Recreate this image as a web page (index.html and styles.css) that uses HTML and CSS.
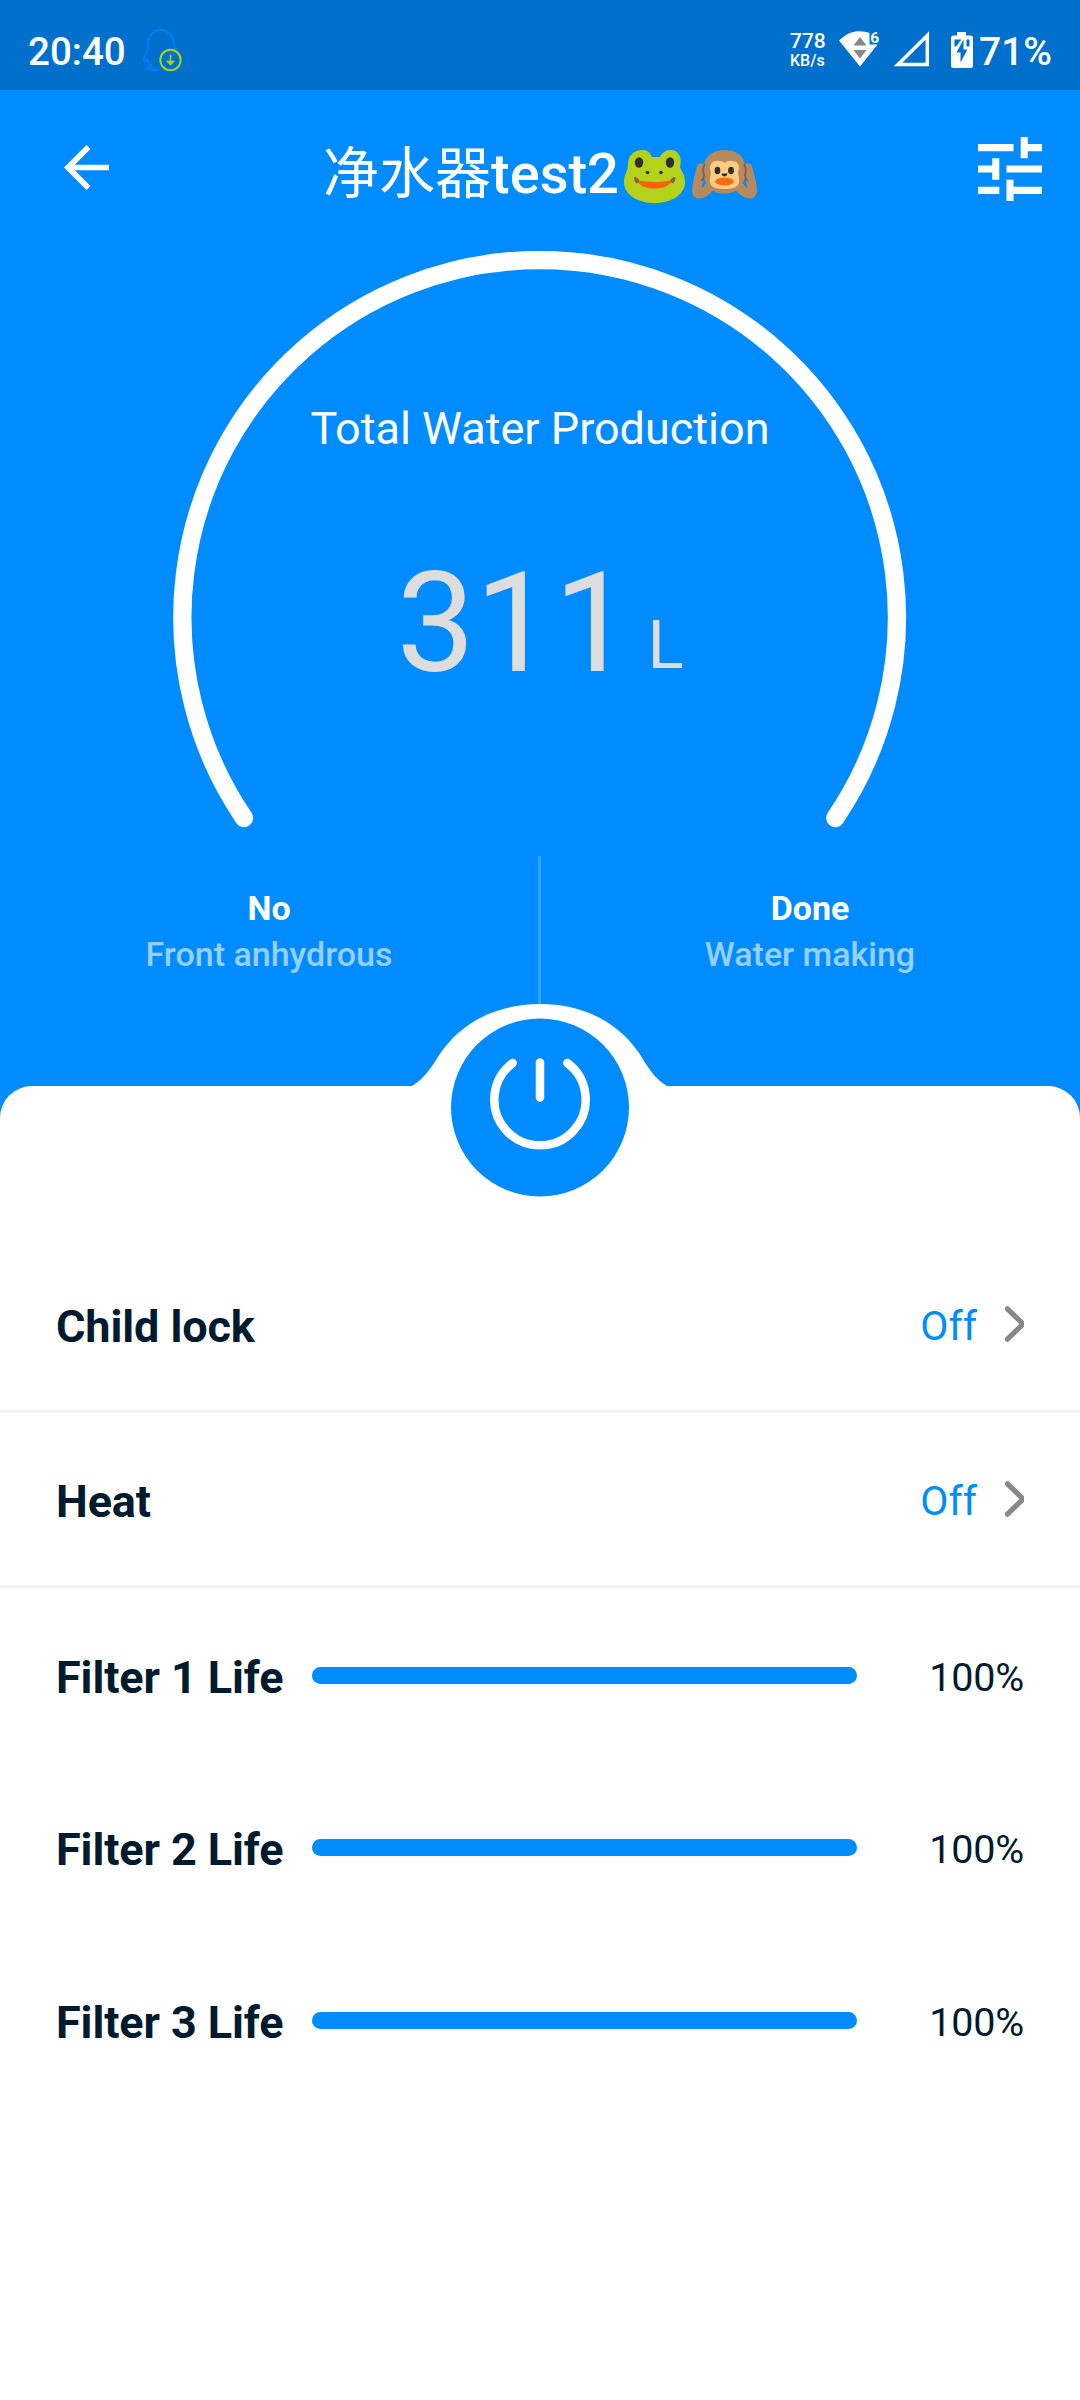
FILE: index.html
```html
<!DOCTYPE html>
<html lang="en">
<head>
<meta charset="utf-8">
<title>净水器test2</title>
<link rel="stylesheet" href="styles.css">
</head>
<body>
<main class="screen">
  <header class="status">
    <span class="clock">20:40</span>
    <svg class="qq" viewBox="0 0 40 43" width="40" height="43">
      <path d="M17 41C12 43 6 42 5.500 40C7 39 9 38.500 9 37.500C7 36 6 34 5.500 31.500C4 33.500 2.500 34 2 32C2 28 3.500 26 6 22.500V17C6 8 11 2 18.500 2S31 8 32 15L33 21" fill="none" stroke="#007cff" stroke-width="2"/>
      <circle cx="28.500" cy="32" r="10.200" fill="none" stroke="#a8d516" stroke-width="1.900"/>
      <path d="M28.500 26.500V35" stroke="#a8d516" stroke-width="1.600"/>
      <path d="M23.800 32.800H33.200L28.500 37.800Z" fill="#a8d516"/>
    </svg>
    <div class="speed"><span class="rate">778</span><span class="unit">KB/s</span></div>
    <svg class="wifi" viewBox="0 0 44 36" width="44" height="36">
      <path d="M0 9.500C11 -1.500 22 -1 30.500 2V13.500H38.500L21 35.500Z" fill="#fff"/>
      <path d="M14.500 14.500L21 6L27.500 14.500ZM14.500 19H27.500L21 27.500Z" fill="#888"/>
      <text x="31.200" y="12" class="wifi-gen">6</text>
    </svg>
    <svg class="signal" viewBox="0 0 36 36" width="36" height="36"><path d="M4 33.400L33.300 4.500V33.400Z" fill="none" stroke="#fff" stroke-width="3.500"/></svg>
    <svg class="battery" viewBox="0 0 22 36" width="22" height="36">
      <path d="M6 0H15V3.500H19.500Q22 3.500 22 6V33.500Q22 36 19.500 36H2.500Q0 36 0 33.500V6Q0 3.500 2.500 3.500H6Z" fill="#fff"/>
      <path d="M3.500 7.500H10.500L5 14.500H3.500ZM15.500 7.500H18.500V14.500H15.500Z" fill="#0070cc"/>
      <path d="M12.500 7.500L5.500 20.500H9.500V30.500L16.500 17.500H12.500Z" fill="#0070cc"/>
    </svg>
    <span class="percent">71%</span>
  </header>

  <section class="hero">
    <nav class="toolbar">
      <svg class="back" viewBox="4 4 16 16" width="45" height="45"><path d="M20 11H7.830l5.590-5.590L12 4l-8 8 8 8 1.410-1.410L7.830 13H20z" fill="#fff"/></svg>
      <h1 class="title"><span class="label"><span class="hanzi">净水器</span>test2</span>
        <svg class="frog" viewBox="0 0 61 53" width="61" height="53">
          <path d="M4 14C4 4 12 0 18 0C24 0 26 3 28 7H36C38 3 41 0 47 0C53 0 59 6 56 17C57 21 61 24 61 32C61 45 47 53 30.500 53S0 45 0 32C0 24 4 21 4 14Z" fill="#b5d21a"/>
          <ellipse cx="15" cy="12.500" rx="4.200" ry="5.200" fill="#2f2f2f"/><ellipse cx="46" cy="12.500" rx="4.200" ry="5.200" fill="#2f2f2f"/>
          <circle cx="23.500" cy="22.500" r="1.800" fill="#2f2f2f"/><circle cx="37" cy="22.500" r="1.800" fill="#2f2f2f"/>
          <path d="M12 30Q30.500 34 49 30C46 36 39 38.500 30.500 38.500S15 36 12 30Z" fill="#ff6110"/>
          <path d="M10 28Q10 26.500 12.500 27.500Q15 29 15 31.500L12.500 33.500Q10 31 10 28ZM51.500 28Q51.500 26.500 49 27.500Q46 29 46 31.500L49 33.500Q51.500 31 51.500 28Z" fill="#855c52"/>
        </svg>
        <svg class="monkey" viewBox="0 0 65 49" width="65" height="49">
          <path d="M9.500 18C7 28 4 36 5 42C6 46 15 43 19 34M55.500 18C58 28 61 36 60 42C59 46 50 43 46 34" fill="none" stroke="#b78a5e" stroke-width="9.500" stroke-linecap="round"/>
          <path d="M12 17C12 6 21 0 32.500 0S53 6 53 17C54 25 53 31 49 36C45 41 40 43.500 32.500 43.500S20 41 16 36C12 31 11 25 12 17Z" fill="#b78a5e"/>
          <path d="M13 14Q10 19 12 25Q12 29 9 31M52 14Q55 19 53 25Q53 29 56 31" fill="none" stroke="#855c52" stroke-width="1.800"/>
          <path d="M32.500 13C29 10 21 9.500 18.500 15C17 19 20 21 18 28C16.500 36 22 39 32.500 39S48.500 36 47 28C45 21 48 19 46.500 15C44 9.500 36 10 32.500 13Z" fill="#ffcc80"/>
          <ellipse cx="25.500" cy="20.500" rx="2.900" ry="3.800" fill="#2f2f2f"/><ellipse cx="39" cy="20.500" rx="2.900" ry="3.800" fill="#2f2f2f"/>
          <path d="M29.500 23.500H35.500Q35 26.500 32.500 26.500T29.500 23.500Z" fill="#2f2f2f"/><ellipse cx="32.500" cy="31.500" rx="9.500" ry="4" fill="#ff6d12"/>
        </svg>
      </h1>
      <svg class="tune" viewBox="3 3 18 18" width="64" height="64"><path d="M3 17v2h6v-2H3zM3 5v2h10V5H3zm10 16v-2h8v-2h-8v-2h-2v6h2zM7 9v2H3v2h4v2h2V9H7zm14 4v-2H11v2h10zm-6-4h2V7h4V5h-4V3h-2v6z" fill="#fff"/></svg>
    </nav>

    <div class="gauge">
      <svg class="arc" viewBox="0 0 734 577" width="734" height="577"><path d="M71 567A357.300 357.300 0 1 1 662.300 567" fill="none" stroke="#fff" stroke-width="18.300" stroke-linecap="round"/></svg>
      <div class="reading">
        <p class="caption">Total Water Production</p>
        <p class="total">311<span class="litre">L</span></p>
      </div>
    </div>

    <div class="states">
      <div class="state"><strong>No</strong><span>Front anhydrous</span></div>
      <div class="state"><strong>Done</strong><span>Water making</span></div>
    </div>
  </section>

  <section class="sheet">
    <svg class="power" viewBox="0 0 256 194" width="256" height="194">
      <path d="M0 82C9 77 18 66 24 56C48 16 88 0 128 0S208 16 231.500 56C237 66 246 77 255 82V84H0Z" fill="#fff"/>
      <circle cx="128" cy="103.500" r="89" fill="#008cff"/>
      <path d="M100.700 59A45.700 45.700 0 1 0 155.300 59M128 58.400V93.400" fill="none" stroke="#fff" stroke-width="8.500" stroke-linecap="round"/>
    </svg>
    <div class="row"><span class="name">Child lock</span><span class="value">Off</span><svg class="chevron" viewBox="0 0 19 36" width="19" height="36"><path d="M2.500 2.800L18 18L2.500 33.200" fill="none" stroke="#888" stroke-width="5.200" stroke-linecap="round" stroke-linejoin="round"/></svg></div>
    <div class="row"><span class="name">Heat</span><span class="value">Off</span><svg class="chevron" viewBox="0 0 19 36" width="19" height="36"><path d="M2.500 2.800L18 18L2.500 33.200" fill="none" stroke="#888" stroke-width="5.200" stroke-linecap="round" stroke-linejoin="round"/></svg></div>
    <div class="filters">
      <div class="filter"><span class="name">Filter 1 Life</span><div class="track"><div class="fill" style="width:100%"></div></div><span class="life">100%</span></div>
      <div class="filter"><span class="name">Filter 2 Life</span><div class="track"><div class="fill" style="width:100%"></div></div><span class="life">100%</span></div>
      <div class="filter"><span class="name">Filter 3 Life</span><div class="track"><div class="fill" style="width:100%"></div></div><span class="life">100%</span></div>
    </div>
  </section>
</main>
</body>
</html>
```
FILE: styles.css
```css
* { box-sizing: border-box; }
body, h1, p { margin: 0; }
body { background: #008cff; font-family: Roboto, "Noto Sans CJK SC", sans-serif; color: #001a2e; }
svg { display: block; flex: none; overflow: visible; }
.screen { width: 1080px; height: 2400px; display: flex; flex-direction: column; overflow: hidden; }

.status { height: 90px; background: #0070cc; color: #fff; display: flex; align-items: flex-start; padding: 0 29px 0 28px; font-weight: 500; white-space: nowrap; }
.clock { width: 114px; font-size: 38.500px; line-height: 46px; padding-top: 29px; }
.qq { margin-top: 28px; }
.speed { margin-left: auto; width: 49px; display: flex; flex-direction: column; padding-top: 30px; }
.rate { font-size: 21px; line-height: 22px; }
.unit { font-size: 16px; line-height: 18px; }
.wifi { margin-top: 31px; }
.wifi-gen { font: 700 15.500px Roboto, sans-serif; fill: #fff; }
.signal { margin: 31px 0 0 11px; }
.battery { margin: 32px 0 0 21px; }
.percent { width: 72px; margin-left: 6px; padding-top: 29px; font-size: 39px; line-height: 46px; }

.hero { height: 996px; display: flex; flex-direction: column; color: #fff; }
.toolbar { height: 161px; display: flex; align-items: flex-start; padding: 0 38px 0 64px; }
.back { margin-top: 55px; }
.title { flex: 1; display: flex; align-items: flex-start; padding-left: 214px; font-size: 56px; line-height: 66px; font-weight: 500; white-space: nowrap; }
.label { width: 301px; margin-top: 51px; }
.hanzi { font-weight: 400; }
.frog { margin-top: 60px; }
.monkey { margin: 60px 0 0 7px; }
.tune { margin-top: 47px; }

.gauge { height: 605px; display: grid; justify-content: center; }
.arc, .reading { grid-area: 1 / 1; }
.reading { text-align: center; padding-top: 151px; }
.caption { font-size: 45px; line-height: 54px; }
.total { margin-top: 85px; font-size: 140px; line-height: 164px; color: #ddd; white-space: nowrap; }
.litre { font-size: 67px; line-height: 1; margin-left: 15px; vertical-align: 3px; }

.states { height: 230px; display: grid; grid-template-columns: 1fr 1fr; position: relative; }
.states::after { content: ""; position: absolute; left: 538px; top: 0; width: 3px; height: 150px; background: rgba(255, 255, 255, .2); }
.state { display: flex; flex-direction: column; align-items: center; padding-top: 29px; font-size: 34px; line-height: 46px; }
.state:first-child { padding-right: 2px; }
.state strong { font-weight: 700; }
.state span { font-weight: 500; color: rgba(255, 255, 255, .6); }

.sheet { flex: 1; position: relative; background: #fff; border-radius: 32px 32px 0 0; padding-top: 152px; }
.power { position: absolute; left: 412px; top: -82px; }
.row, .filter { display: flex; align-items: center; padding: 0 56px; }
.row { height: 175px; border-bottom: 3px solid #f3f3f3; }
.filters { padding-top: 1px; }
.filter { height: 172.500px; }
.name { font-size: 45px; line-height: 54px; font-weight: 700; letter-spacing: -.1px; padding-top: 5px; }
.row .name { flex: 1; }
.value { font-size: 41px; line-height: 48px; color: #008cff; margin-right: 28px; padding-top: 3px; }
.chevron { overflow: hidden; }
.filter .name { width: 256px; white-space: nowrap; }
.track { width: 545px; height: 17px; border-radius: 9px; background: #e6e6e6; }
.fill { height: 100%; border-radius: 9px; background: #008cff; }
.life { flex: 1; text-align: right; font-size: 39.500px; letter-spacing: -.2px; line-height: 48px; padding-top: 5px; }
```
